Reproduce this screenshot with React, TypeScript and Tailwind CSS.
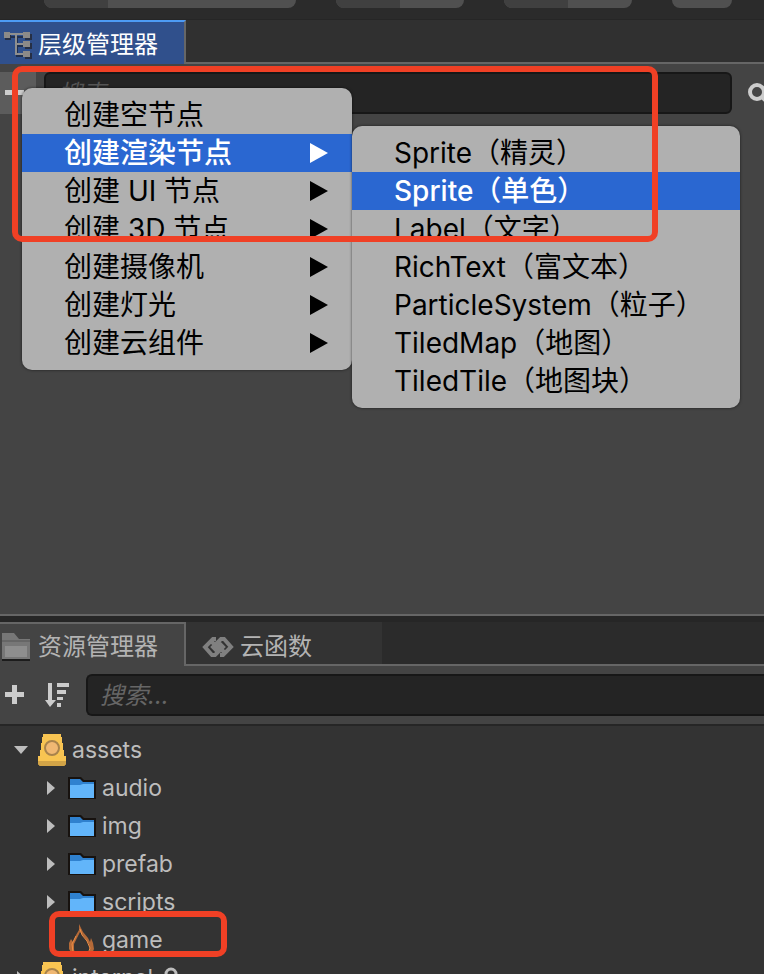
import type { ReactNode } from "react";

const createItems = [
  { label: "创建空节点", sub: false },
  { label: "创建渲染节点", sub: true, active: true },
  { label: "创建 UI 节点", sub: true },
  { label: "创建 3D 节点", sub: true },
  { label: "创建摄像机", sub: true },
  { label: "创建灯光", sub: true },
  { label: "创建云组件", sub: true },
];

const renderItems = [
  { label: "Sprite（精灵）" },
  { label: "Sprite（单色）", active: true },
  { label: "Label（文字）" },
  { label: "RichText（富文本）" },
  { label: "ParticleSystem（粒子）" },
  { label: "TiledMap（地图）" },
  { label: "TiledTile（地图块）" },
];

const folders = ["audio", "img", "prefab", "scripts"];

const HierarchyIcon = () => (
  <svg className="h-7 w-7 shrink-0" viewBox="0 0 28 28" aria-hidden="true">
    <path d="M5 6h18M13 5v20h10M13 15h10" fill="none" stroke="#1f2f50" strokeWidth="2" />
    <path d="M1 3h6v6H1zM21 3h7v6h-7zM21 12h7v6h-7zM21 22h7v6h-7z" fill="#262f45" />
    <path d="M5 3h18M12 3v20h10M12 13h10" fill="none" stroke="#8f8f8f" strokeWidth="2" />
    <path d="M0 1h6v6H0zM19 1h7v6h-7zM19 10h7v6h-7zM19 20h7v6h-7z" fill="#8c8a88" />
  </svg>
);

const AssetsIcon = () => (
  <svg className="h-7 w-8 shrink-0" viewBox="0 0 32 28" aria-hidden="true">
    <path d="M2 26h28v2H2z" fill="#1c1c1c" />
    <path d="M2 0h12l5 6h11v20H2z" fill="#777" />
    <path d="M5 13h22v11H5z" fill="#8e8e8e" />
    <path d="M2 8h28" stroke="#666" strokeWidth="2" />
  </svg>
);

const CloudIcon = () => (
  <svg className="h-6 w-8 shrink-0" viewBox="0 0 32 24" fill="none" stroke="#808080" strokeWidth="4" aria-hidden="true">
    <path d="M14 4H11L3 12l7 8h3l3-3-5-5 3-3 8 8" />
    <path d="M18 20h3l8-8-7-8h-3l-3 3 5 5-3 3-8-8" />
  </svg>
);

const SortIcon = () => (
  <svg className="h-6 w-6" viewBox="0 0 24 24" aria-hidden="true">
    <path d="M3 0h4v17h4l-6 7-5-7h3zM12 0h12v4H12zM12 7h9v4h-9zM12 14h6v3h-6zM12 20h4v4h-4z" fill="#ccc" />
  </svg>
);

const PlusIcon = () => (
  <svg className="h-5 w-5" viewBox="0 0 20 20" aria-hidden="true">
    <path d="M7 0h5v7h7v5h-7v7H7v-7H0V7h7z" fill="#ccc" />
  </svg>
);

const DatabaseIcon = () => (
  <svg className="h-8 w-7 shrink-0" viewBox="0 0 28 32" aria-hidden="true">
    <path d="M5 0h18v3h1v6h1v7h1v6h2v8l-2 2H2l-2-2v-8h2v-6h1V9h1V3h1z" fill="#f8c452" />
    <path d="M0 27h28v3l-2 2H2l-2-2z" fill="#d2a447" />
    <circle cx="14" cy="14" r="7" fill="#f0b873" stroke="#a8834c" strokeWidth="2" />
  </svg>
);

const FolderIcon = () => (
  <svg className="h-6 w-7 shrink-0" viewBox="0 0 28 24" aria-hidden="true">
    <path d="M0 1h13l3 3h12v19H0z" fill="#17120f" />
    <path d="M2 3h10l3 3h11v4H2z" fill="#2f81cf" />
    <path d="M2 9h10l3-1h11v14H2z" fill="#62b5fa" />
  </svg>
);

const FireIcon = () => (
  <svg className="h-8 w-7 shrink-0" viewBox="0 0 28 32" aria-hidden="true">
    <path
      d="M11 0l4 8 5 6 2 4 1-4 2 5 1 6-2 5-5 2 3-6-1-6-4-6-5-6-3 6-3 6 0 6 3 6-5-2-3-5 0-6 2-4 2 3 3-7 3-5z"
      fill="#b56a38"
    />
    <path d="M12 5l2 6 5 6 3 7-2 6M8 12l-4 8 1 8" fill="none" stroke="#ef8f45" />
  </svg>
);

const LockIcon = () => (
  <svg className="ml-1 h-6 w-4 shrink-0" viewBox="0 0 16 24" aria-hidden="true">
    <path d="M3 11V8a5 5 0 0 1 10 0v3" fill="none" stroke="#bdbdbd" strokeWidth="3" />
    <path d="M1 11h14v11H1z" fill="#bdbdbd" />
  </svg>
);

const Arrow = ({ open = false }: { open?: boolean }) => (
  <svg className="h-4 w-4 shrink-0" viewBox="0 0 16 16" fill="#bdbdbd" aria-hidden="true">
    {open ? <path d="M2 4h14l-7 8z" /> : <path d="M5 1v14l8-7z" />}
  </svg>
);

type MenuItem = { label: string; sub?: boolean; active?: boolean };

const Menu = ({ items, className }: { items: MenuItem[]; className: string }) => (
  <div role="menu" className={`absolute rounded-[10px] bg-[#b0b0b0] py-2 shadow-[0_0_3px_rgba(0,0,0,0.6)] ${className}`}>
    {items.map(({ label, sub, active }) => (
      <button
        key={label}
        role="menuitem"
        className={`flex h-[38px] w-full items-center justify-between pr-6 pl-[42px] text-left text-[28px] leading-[38px] whitespace-nowrap ${
          active ? "bg-[#2a67d1] font-medium text-white" : "text-black"
        }`}
      >
        {label}
        {sub && (
          <svg className="h-5 w-[18px]" viewBox="0 0 18 20" fill="currentColor" aria-hidden="true">
            <path d="M0 0v20l18-10z" />
          </svg>
        )}
      </button>
    ))}
  </div>
);

const TreeRow = ({ children, nested = false }: { children: ReactNode; nested?: boolean }) => (
  <li className={`flex h-[38px] items-center ${nested ? "pl-[42px]" : "pl-3"}`}>{children}</li>
);

const Toolbar = () => (
  <div className="flex h-5 shrink-0 items-start border-b border-[#262626] bg-[#2b2b2b] pl-11">
    <div className="flex h-2 w-[252px] overflow-hidden rounded-b-lg bg-[#505050]">
      <div className="w-16 bg-[#404040]" />
    </div>
    <div className="ml-10 flex h-2 w-32 overflow-hidden rounded-b-lg bg-[#505050]">
      <div className="w-16 bg-[#404040]" />
    </div>
    <div className="ml-10 flex h-2 w-32 overflow-hidden rounded-b-lg bg-[#505050]">
      <div className="w-16 bg-[#404040]" />
    </div>
    <div className="ml-10 h-2 w-[60px] rounded-b-lg bg-[#505050]" />
  </div>
);

const HierarchyPanel = () => (
  <section className="relative flex min-h-0 flex-[594] flex-col border-b-2 border-[#666] bg-[#444]">
    <div className="flex h-11 shrink-0 border-b-2 border-[#666] bg-[#303030]">
      <button className="-mb-0.5 flex w-[186px] items-center gap-[6px] border-t-2 border-r-2 border-t-[#4d9bf5] border-r-[#666] bg-[#30508c] pt-1 pl-1 text-2xl text-white">
        <HierarchyIcon />
        层级管理器
      </button>
    </div>
    <div className="flex h-[58px] shrink-0 items-center">
      <button className="flex h-[42px] w-9 items-center bg-[#5c5c5c] pl-[5px]" aria-label="新建">
        <PlusIcon />
      </button>
      <input
        type="search"
        aria-label="搜索节点"
        placeholder="搜索..."
        className="mr-4 ml-2 h-[42px] min-w-0 flex-1 rounded-md border-2 border-[#171717] bg-[#242424] px-3 text-2xl italic placeholder:text-[#555]"
      />
      <button className="h-[42px] w-4 overflow-hidden" aria-label="查找">
        <svg className="h-[22px] w-[22px]" viewBox="0 0 22 22" fill="none" stroke="#ccc" strokeWidth="4" aria-hidden="true">
          <circle cx="9" cy="10" r="7" />
          <path d="M14 15l6 6" />
        </svg>
      </button>
    </div>

    <Menu items={createItems} className="top-[68px] left-[22px] w-[330px]" />
    <Menu items={renderItems} className="top-[106px] left-[352px] w-[388px]" />
    <div className="pointer-events-none absolute top-[46px] left-3 h-[176px] w-[646px] rounded-[10px] border-[6px] border-[#f04025]" />
  </section>
);

const AssetsPanel = () => (
  <section className="flex min-h-0 flex-[352] flex-col bg-[#333]">
    <div className="flex h-11 shrink-0 border-b-2 border-[#666] bg-[#2b2b2b]">
      <button className="-mb-0.5 flex w-[186px] items-center gap-[6px] border-t-2 border-r-2 border-[#666] bg-[#444] pt-1 text-2xl text-[#b3b3b3]">
        <AssetsIcon />
        资源管理器
      </button>
      <button className="flex w-[196px] items-center gap-[6px] bg-[#333] pt-2 pl-4 text-2xl text-[#b3b3b3]">
        <CloudIcon />
        云函数
      </button>
    </div>
    <div className="flex h-[60px] shrink-0 items-center border-b-2 border-[#262626] bg-[#444] pl-[5px]">
      <button aria-label="新建资源">
        <PlusIcon />
      </button>
      <button className="ml-5" aria-label="排序">
        <SortIcon />
      </button>
      <input
        type="search"
        aria-label="搜索资源"
        placeholder="搜索..."
        className="ml-[17px] h-[42px] min-w-0 flex-1 rounded-l-md border-2 border-r-0 border-[#171717] bg-[#242424] px-3 text-2xl italic placeholder:text-[#666]"
      />
    </div>
    <ul className="min-h-0 flex-1 overflow-hidden pt-[5px] text-[23px] text-[#bdbdbd]">
      <TreeRow>
        <Arrow open />
        <span className="ml-[10px] flex items-center gap-[6px]">
          <DatabaseIcon />
          assets
        </span>
      </TreeRow>
      {folders.map((name) => (
        <TreeRow key={name} nested>
          <Arrow />
          <span className="ml-[10px] flex items-center gap-[6px]">
            <FolderIcon />
            {name}
          </span>
        </TreeRow>
      ))}
      <li className="relative flex h-[38px] items-center gap-[6px] pl-[68px]">
        <FireIcon />
        game
        <div className="pointer-events-none absolute -top-[10px] left-[49px] h-[46px] w-[178px] rounded-[10px] border-[6px] border-[#f04025]" />
      </li>
      <TreeRow>
        <Arrow />
        <span className="ml-[10px] flex items-center gap-[6px]">
          <DatabaseIcon />
          internal
          <LockIcon />
        </span>
      </TreeRow>
    </ul>
  </section>
);

const App = () => (
  <main className="flex h-screen flex-col overflow-hidden bg-[#262626] font-['Inter','Noto_Sans_CJK_SC',sans-serif]">
    <Toolbar />
    <HierarchyPanel />
    <div className="h-[6px] shrink-0" />
    <AssetsPanel />
  </main>
);

export default App;
